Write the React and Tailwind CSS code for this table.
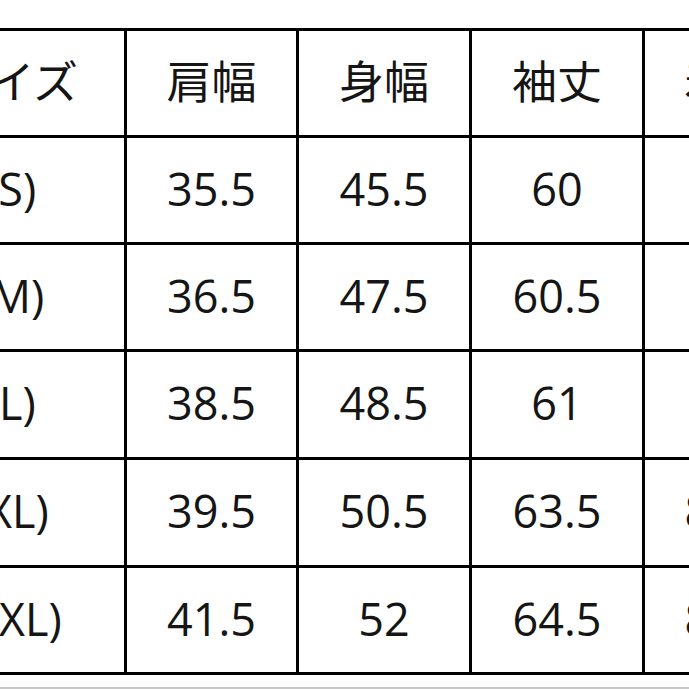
const header = ['1 サイズ', '肩幅', '身幅', '袖丈', '着丈']

const rows = [
  { h: 'h-[104px]', cells: ['1 (S)', '35.5', '45.5', '60', '72'] },
  { h: 'h-[104px]', cells: ['2 (M)', '36.5', '47.5', '60.5', '74'] },
  { h: 'h-[105px]', cells: ['3 (L)', '38.5', '48.5', '61', '76'] },
  { h: 'h-[105px]', cells: ['4 (XL)', '39.5', '50.5', '63.5', '80.5'] },
  { h: 'h-[104px]', cells: ['5 (XXL)', '41.5', '52', '64.5', '81.5'] },
]

function Cell({ children, h }) {
  return (
    <div className={`${h} flex items-center justify-center whitespace-nowrap bg-white pb-[4px] text-[45px] font-normal leading-none text-[#151515]`}>
      {children}
    </div>
  )
}

export default function App() {
  return (
    <div
      className="relative h-[689px] w-[689px] overflow-hidden bg-white"
      style={{ fontFamily: '"Open Sans", "Noto Sans CJK JP", sans-serif' }}
    >
      <div className="ml-[-143px] mt-[28px] inline-grid grid-cols-[264px_169px_170px_170px_168px] gap-[3px] bg-black p-[3px]">
        {header.map((t, i) => (
          <Cell key={i} h="h-[104px]">
            {i === 0 ? <span className="pl-[1px]"><span className="invisible">1 </span>サイズ</span> : t}
          </Cell>
        ))}
        {rows.map((r, ri) =>
          r.cells.map((c, ci) => (
            <Cell key={`${ri}-${ci}`} h={r.h}>
              {c}
            </Cell>
          ))
        )}
      </div>
      <div className="absolute bottom-0 left-0 h-[2px] w-full bg-[#c8c8c8]" />
    </div>
  )
}
